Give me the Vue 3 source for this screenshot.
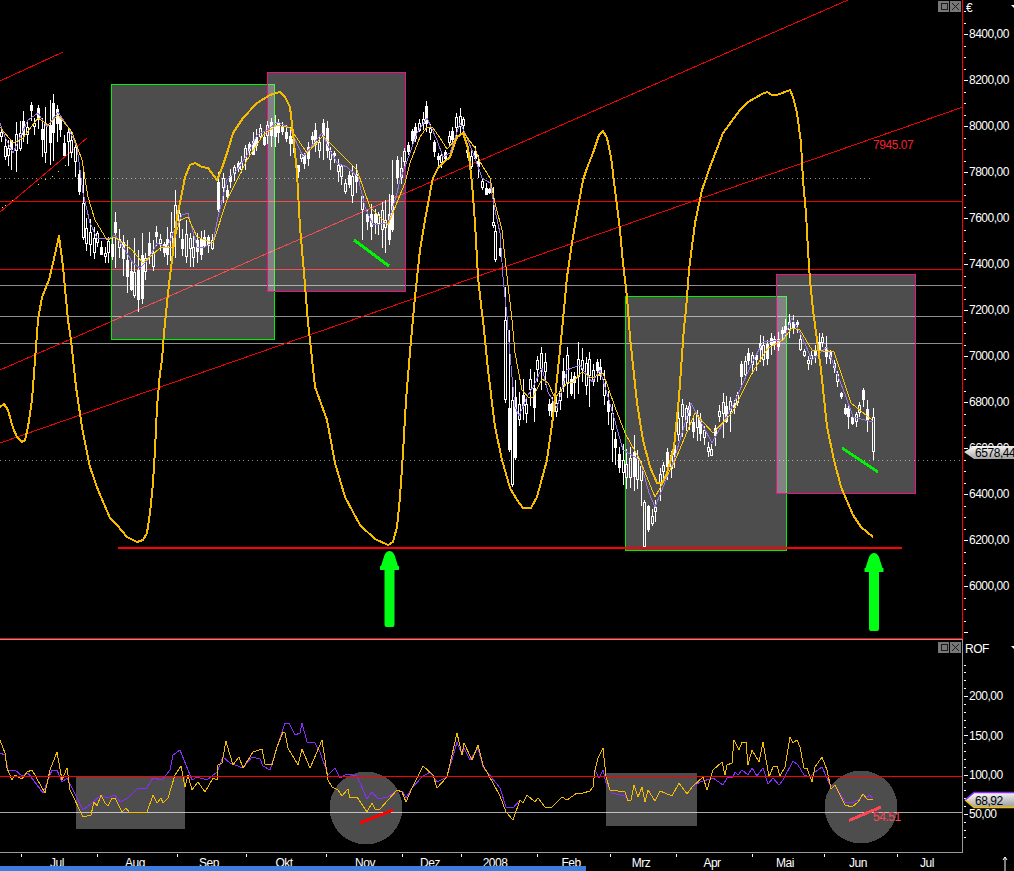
<script setup>
const HI = [[0,125],[10,130],[22,110],[30,100],[38,100],[47,100],[52,90],[60,100],[68,125],[75,140],[80,170],[84,210],[95,225],[105,225],[115,212],[125,240],[135,238],[150,225],[155,222],[165,235],[172,205],[180,190],[190,230],[205,228],[212,230],[218,172],[228,170],[240,155],[250,135],[262,120],[275,115],[290,125],[303,155],[315,122],[327,115],[335,155],[345,165],[358,145],[364,190],[375,205],[385,200],[392,160],[402,150],[408,137],[415,123],[422,110],[426,98],[430,120],[433,137],[438,152],[443,152],[450,122],[455,108],[462,103],[465,133],[470,147],[475,143],[480,162],[485,177],[490,187],[495,230],[500,240],[503,270],[506,287],[510,320],[513,380],[520,353],[527,372],[537,347],[542,342],[546,355],[548,383],[555,392],[561,360],[568,340],[573,363],[579,337],[586,352],[597,352],[603,365],[609,387],[616,427],[626,447],[635,433],[647,487],[655,500],[659,460],[669,443],[679,397],[689,392],[701,413],[712,440],[722,388],[734,395],[740,363],[752,333],[763,330],[780,332],[791,302],[798,320],[807,357],[815,340],[822,327],[834,353],[843,397],[853,413],[863,388],[873,408]]
const LO = [[0,150],[7,170],[12,182],[22,165],[35,140],[45,170],[52,165],[60,155],[70,170],[77,195],[82,240],[90,268],[97,255],[110,270],[118,285],[125,290],[132,300],[140,312],[147,285],[157,270],[165,270],[172,265],[180,258],[192,270],[200,262],[215,250],[222,210],[230,190],[245,170],[260,145],[285,150],[295,175],[310,165],[325,160],[335,180],[345,195],[355,210],[362,240],[375,245],[388,253],[395,230],[402,177],[408,158],[415,143],[425,133],[430,143],[433,155],[438,167],[443,170],[450,148],[457,140],[462,137],[467,158],[470,173],[475,170],[482,192],[490,200],[493,225],[498,260],[502,283],[506,403],[508,450],[512,487],[515,458],[520,428],[534,427],[539,387],[544,410],[548,423],[554,423],[558,427],[562,403],[573,402],[583,390],[589,410],[593,390],[599,383],[609,447],[613,467],[626,490],[638,493],[644,547],[649,532],[655,522],[664,487],[672,487],[679,457],[688,433],[701,447],[709,467],[718,440],[732,435],[741,387],[749,383],[769,365],[786,340],[793,342],[802,360],[812,377],[824,360],[833,378],[841,402],[850,438],[858,435],[870,433],[873,460]]

// Large candles read directly from the chart: x, wick high, body top, body bottom, wick low, filled
const NOTABLE = [
  [11, 150, 140, 150, 170, true], [50, 100, 125, 143, 165, true], [83, 170, 203, 238, 240, false],
  [115, 212, 222, 233, 268, true], [138, 250, 270, 300, 312, true], [134, 238, 272, 296, 298, false],
  [218, 172, 182, 210, 212, true], [175, 190, 205, 228, 258, false], [298, 172, 165, 172, 178, true],
  [362, 195, 196, 210, 240, false], [385, 200, 220, 228, 253, false], [392, 160, 195, 230, 232, true],
  [493, 187, 222, 226, 228, false], [495, 225, 231, 260, 262, false], [505, 287, 320, 400, 403, false],
  [509, 330, 408, 450, 452, true], [512, 380, 400, 485, 487, false], [515, 380, 397, 458, 460, true],
  [644, 500, 502, 547, 549, false], [648, 505, 506, 530, 532, true], [655, 500, 507, 512, 522, false],
  [873, 408, 417, 452, 460, false]
]

const lerp = (pts, x) => {
  for (let i = 1; i < pts.length; i++) {
    if (x <= pts[i][0]) {
      const [a, b] = [pts[i - 1], pts[i]]
      return a[1] + (b[1] - a[1]) * (x - a[0]) / (b[0] - a[0])
    }
  }
  return pts[pts.length - 1][1]
}

let seed = 20080612
const rnd = () => {
  seed = (seed * 16807) % 2147483647
  return seed / 2147483647
}

let wickD = ''
let fillD = ''
let hollowD = ''
const rect = (x, y, w, h) => `M${x} ${y}h${w}v${h}h${-w}z`
const addCandle = (x, high, top, bottom, low, filled) => {
  if (filled) {
    wickD += rect(x, high, 1, low - high)
    fillD += rect(x - 1, top, 3, bottom - top)
  } else {
    wickD += rect(x, high, 1, top - high) + rect(x, bottom, 1, Math.max(0, low - bottom))
    hollowD += `M${x - 0.5} ${top + 0.5}h2v${bottom - top - 1}h-2z`
  }
}
const taken = NOTABLE.map((c) => c[0])
for (let fx = 1; fx < 870; fx += 3.7) {
  const x = Math.round(fx)
  const hi = lerp(HI, x)
  const span = lerp(LO, x) - hi
  const f = 0.4 + 0.6 * Math.pow(rnd(), 1.3)
  const high = Math.round(hi + rnd() * (1 - f) * span)
  const s = f * span
  const low = Math.round(high + s)
  const top = Math.round(high + s * (0.1 + rnd() * 0.3))
  const bottom = Math.min(low, top + Math.max(3, Math.round(s * (0.25 + rnd() * 0.4))))
  const filled = rnd() > 0.5
  if (taken.some((t) => Math.abs(t - x) < 3)) continue
  addCandle(x, high, top, bottom, low, filled)
}
NOTABLE.forEach((c) => addCandle(...c))

const osc = '0,407 4,404 8,410 13,428 17,437 22,442 25,440 28,427 32,400 35,360 38,320 42,297 49,280 53,263 59,236 63,267 68,320 71,340 76,387 82,427 90,467 98,490 110,518 117,525 127,537 137,542 143,540 147,533 150,513 153,483 155,450 157,407 160,373 162,360 164,333 168,293 172,260 177,217 182,193 185,177 190,165 195,163 202,167 208,168 217,180 222,168 228,150 233,133 243,118 257,103 270,95 280,92 285,97 290,107 293,133 297,173 300,227 304,273 308,323 310,340 315,387 327,420 335,463 345,497 360,525 375,539 388,545 393,542 397,527 400,497 403,453 406,400 411,340 412,330 415,297 420,250 425,220 430,193 433,178 438,168 443,163 450,157 457,137 463,133 468,148 472,183 475,223 478,277 482,313 483,320 488,370 495,427 502,460 510,488 517,500 523,508 531,508 537,497 547,460 553,417 560,350 563,320 567,277 572,243 577,213 583,180 587,168 593,153 599,135 603,131 607,138 611,157 615,190 620,230 623,263 627,297 630,337 637,403 643,440 650,467 657,483 662,483 667,473 674,447 679,397 684,327 686,310 689,270 695,223 702,190 710,167 723,133 740,110 748,102 762,94 767,92 772,95 777,95 790,90 793,97 797,113 801,143 803,180 806,213 808,250 810,280 813,310 821,370 827,427 834,460 841,487 853,515 861,527 873,537'

const maPurple = '0,123 5,137 13,153 22,133 28,120 38,113 47,127 58,112 68,127 77,147 83,193 90,223 97,238 110,238 115,235 123,247 133,263 140,268 148,260 157,243 167,248 173,233 182,215 188,213 197,247 203,248 213,242 218,217 227,180 237,170 247,155 257,135 267,130 278,122 290,128 303,157 322,133 330,150 337,163 347,167 358,177 365,207 373,225 388,223 397,193 400,180 410,153 417,133 427,118 437,140 443,157 450,153 460,123 465,133 475,158 482,178 490,183 495,210 500,233 503,277 507,317 508,330 512,377 515,407 519,416 527,397 533,387 542,368 548,392 557,408 567,370 580,365 592,382 600,370 611,407 623,450 640,460 649,493 655,507 674,460 691,403 712,443 734,403 752,363 763,342 783,340 792,318 802,337 812,360 827,347 846,397 853,417 873,422'

const maYellow = '0,127 13,143 23,138 38,118 48,125 58,115 72,132 82,160 88,197 95,220 107,240 115,237 132,250 143,263 160,248 172,247 180,220 188,217 197,237 213,243 227,200 247,160 263,135 277,125 290,128 307,153 323,136 357,170 370,207 388,225 400,195 405,183 410,163 420,137 427,127 433,128 440,138 447,149 455,140 463,132 475,148 480,162 490,178 495,203 502,230 506,267 512,320 515,353 522,390 528,397 533,397 542,379 548,383 555,398 567,383 573,382 582,372 592,378 603,373 615,407 625,433 640,460 655,497 674,463 695,413 713,433 732,413 752,373 768,348 783,340 792,328 800,330 812,350 834,352 851,403 872,420'

const rofYellow = '0,740 5,753 7,768 12,780 15,775 22,779 27,772 32,770 45,793 50,770 57,752 62,780 67,768 70,790 83,817 91,815 94,802 97,806 101,795 105,803 108,806 112,798 115,798 122,812 126,808 129,812 135,813 140,812 147,812 153,795 157,803 161,798 163,803 168,798 175,775 181,766 185,787 188,775 192,790 198,782 205,792 213,778 217,780 218,765 222,763 226,741 230,755 233,765 239,757 243,768 253,752 262,749 265,764 272,765 277,747 283,732 285,733 288,748 298,765 302,749 310,768 317,752 322,740 328,780 332,787 338,790 342,796 348,789 350,798 357,797 367,812 372,803 375,809 380,809 388,800 397,790 402,792 406,802 412,788 423,766 433,775 437,788 447,777 457,733 462,755 464,743 472,760 478,745 483,765 493,783 500,796 506,812 513,820 520,800 523,803 527,795 535,802 538,798 545,807 552,807 562,797 567,800 577,793 583,793 590,791 593,787 595,770 598,758 603,748 606,777 610,790 625,792 628,801 631,800 634,785 638,797 642,787 645,802 648,790 655,801 660,791 672,796 679,783 687,794 692,787 703,777 707,790 713,770 722,762 725,775 727,765 732,763 734,740 739,750 742,742 746,742 748,765 752,750 759,762 763,742 769,777 773,767 777,766 780,776 785,767 790,737 793,743 797,740 800,747 804,768 807,768 812,782 815,767 822,757 827,770 831,789 835,785 845,805 852,807 858,802 863,794 867,799 873,800'

const rofPurple = '0,753 5,755 8,770 15,770 22,776 28,773 43,793 52,770 57,770 62,782 67,778 83,810 91,804 101,795 107,798 115,795 120,802 128,798 138,788 147,788 153,778 162,780 170,770 173,755 180,750 192,780 197,777 207,780 217,772 223,757 230,763 243,768 252,757 260,759 263,766 270,770 277,747 285,723 289,723 295,735 300,733 302,723 307,742 315,743 320,752 328,775 335,768 340,778 347,774 357,776 367,799 372,792 378,799 388,797 397,790 403,792 406,798 412,788 422,777 430,772 437,782 447,777 457,742 462,755 464,748 470,760 478,748 483,767 500,788 506,807 513,808 520,800 523,803 527,795 535,802 538,798 545,807 552,807 562,797 567,800 577,793 583,793 590,791 593,787 595,770 599,778 603,770 606,783 612,793 625,796 628,801 631,800 634,785 638,797 642,787 645,802 648,790 655,801 660,791 672,796 679,783 687,794 692,787 700,782 713,778 723,785 727,778 733,777 735,772 738,775 742,770 748,775 752,768 757,776 763,768 768,784 773,778 779,785 783,780 793,761 798,765 804,775 810,777 815,772 822,767 830,785 835,785 845,802 852,803 858,800 863,795 867,798 869,795 873,798'

const priceLabels = []
for (let v = 8400; v >= 6000; v -= 200) priceLabels.push({ text: `${v},00`, y: 34 + (8400 - v) * 0.23 })
const priceTicks = []
for (let k = -2; k <= 52; k++) priceTicks.push({ y: Math.round(34 + 11.5 * k), long: ((k % 4) + 4) % 4 === 0 })

const rofLabels = [['200,00', 696], ['150,00', 736], ['100,00', 775], ['50,00', 814]]
const rofTicks = []
for (let k = -4; k <= 18; k++) rofTicks.push({ y: Math.round(696 + 7.86 * k), long: ((k % 5) + 5) % 5 === 0 })

const months = [['Jul', 57], ['Aug', 135], ['Sep', 209], ['Okt', 284], ['Nov', 365], ['Dez', 430], ['2008', 495], ['Feb', 571], ['Mrz', 641], ['Apr', 712], ['Mai', 785], ['Jun', 858], ['Jul', 927]]
const monthTicks = [21, 97, 177, 246, 326, 402, 461, 537, 610, 676, 752, 824, 897]
const yellowDots = [[2,207],[5,205],[12,200],[38,184],[45,179],[52,176],[58,171],[65,165]]
</script>

<template>
  <div class="terminal">
    <svg class="pane" width="1014" height="640" viewBox="0 0 1014 640">
      <defs>
        <linearGradient id="tag" x1="0" y1="0" x2="0.2" y2="1">
          <stop offset="0" stop-color="#ffffff" />
          <stop offset="1" stop-color="#a8a8a8" />
        </linearGradient>
      </defs>

      <g class="thin">
        <line x1="0" y1="285.5" x2="962" y2="285.5" class="grey" />
        <line x1="0" y1="316.5" x2="962" y2="316.5" class="grey" />
        <line x1="0" y1="343.5" x2="962" y2="343.5" class="grey" />
        <line x1="0" y1="201.5" x2="962" y2="201.5" class="red" />
        <line x1="0" y1="269.5" x2="962" y2="269.5" class="red" />
        <line x1="0" y1="178.5" x2="870" y2="178.5" class="dotted" />
        <line x1="0" y1="460.5" x2="962" y2="460.5" class="dotted" />
        <line x1="0" y1="81" x2="63" y2="52" class="red" />
        <line x1="0" y1="212" x2="87" y2="138" class="red" />
        <line x1="0" y1="370" x2="848" y2="0" class="red" />
        <line x1="0" y1="443" x2="963" y2="107" class="red" />
      </g>
      <rect v-for="d in yellowDots" :key="d[0]" :x="d[0]" :y="d[1]" width="1" height="1" class="dot" />

      <g class="thin">
        <rect x="111.5" y="84.5" width="163" height="255" class="box box-green" />
        <rect x="267.5" y="72.5" width="138" height="219" class="box box-pink" />
        <rect x="625.5" y="296.5" width="161" height="254" class="box box-green" />
        <rect x="776.5" y="274.5" width="139" height="219" class="box box-pink" />
      </g>

      <g class="thin">
        <path :d="wickD" class="candle-fill" />
        <path :d="fillD" class="candle-fill" />
        <path :d="hollowD" class="candle-hollow" />
        <polyline :points="maPurple" class="ma-purple" />
        <polyline :points="maYellow" class="ma-yellow" />
        <polyline :points="osc" class="osc" />
      </g>

      <g class="thin">
        <line x1="354" y1="240" x2="389" y2="266" class="marker-green" />
        <line x1="842" y1="448" x2="878" y2="472" class="marker-green" />
        <rect x="118" y="547" width="784" height="2" class="red-fill" />
        <rect x="962" y="0" width="1" height="638" class="red-fill" />
        <rect x="0" y="637.5" width="963" height="1.5" class="red-fill" />
        <rect x="0" y="639" width="963" height="1" class="axis-fill" />
      </g>

      <path class="arrow" d="M389.5 551q3 0 5 4l3.500 11h1v4h-4.500v54.500q0 2.500 -2 2.500h-6q-2 0 -2 -2.500v-54.500h-4.500v-4h1l3.500 -11q2 -4 5 -4z" />
      <path class="arrow" d="M874 553q3 0 5 4l3.500 11h1v4h-4.500v56.500q0 2.500 -2 2.500h-6q-2 0 -2 -2.500v-56.500h-4.500v-4h1l3.500 -11q2 -4 5 -4z" />

      <text x="873" y="149" class="note">7945.07</text>

      <g class="thin">
        <rect x="938" y="1" width="11" height="11" class="btn" />
        <rect x="941.5" y="3.5" width="6" height="6" class="btn-icon" />
        <rect x="950" y="1" width="11" height="11" class="btn" />
        <path d="M952 3l7 7M959 3l-7 7" class="btn-icon" />
      </g>

      <g class="thin">
        <rect v-for="t in priceTicks" :key="t.y" x="964" :y="t.y" :width="t.long ? 4 : 2" height="1" class="white-fill" />
      </g>
      <text x="966" y="12" class="axis">€</text>
      <path d="M1011 5h3v3z" class="white-fill" />
      <text v-for="l in priceLabels" :key="l.text" x="969" :y="l.y + 4" class="axis">{{ l.text }}</text>

      <path d="M964 452l10 -6h40v13h-40z" fill="url(#tag)" />
      <text x="975" y="457" class="tag-text">6578,44</text>
    </svg>

    <svg class="pane" width="1014" height="231" viewBox="0 640 1014 231">
      <defs>
        <linearGradient id="tag2" x1="0" y1="0" x2="0.2" y2="1">
          <stop offset="0" stop-color="#ffffff" />
          <stop offset="1" stop-color="#a8a8a8" />
        </linearGradient>
      </defs>

      <g class="thin">
        <line x1="0" y1="812.5" x2="962" y2="812.5" class="grey-light" />
        <rect x="76" y="776" width="109" height="53" class="shade" />
        <rect x="606" y="773" width="91" height="53" class="shade" />
      </g>
      <circle cx="366" cy="808" r="36.500" class="shade thin" />
      <circle cx="861" cy="807" r="36.500" class="shade thin" />

      <g class="thin">
        <polyline :points="rofPurple" class="rof-purple" />
        <polyline :points="rofYellow" class="rof-yellow" />
        <line x1="0" y1="776.5" x2="962" y2="776.5" class="rof-red" />
        <line x1="360" y1="823" x2="393" y2="810" class="marker-red" />
        <line x1="849" y1="820.500" x2="881" y2="807" class="marker-red soft" />
        <rect x="962" y="640" width="1" height="213" class="axis-fill" />
        <rect x="0" y="852" width="963" height="1" class="axis-fill" />
      </g>

      <text x="873" y="821" class="note soft-note">54.51</text>

      <g class="thin">
        <rect x="938" y="642" width="11" height="11" class="btn" />
        <rect x="941.5" y="644.5" width="6" height="6" class="btn-icon" />
        <rect x="950" y="642" width="11" height="11" class="btn" />
        <path d="M952 644l7 7M959 644l-7 7" class="btn-icon" />
      </g>

      <text x="965" y="653" class="axis">ROF</text>
      <path d="M1011 646h3v3z" class="white-fill" />

      <g class="thin">
        <rect v-for="t in rofTicks" :key="t.y" x="964" :y="t.y" :width="t.long ? 4 : 2" height="1" class="white-fill" />
        <rect v-for="x in monthTicks" :key="x" :x="x" y="854" width="1" height="3" class="white-fill" />
      </g>
      <text v-for="l in rofLabels" :key="l[0]" x="969" :y="l[1] + 4" class="axis">{{ l[0] }}</text>

      <path d="M965 800l9 -7h40v14h-40z" fill="url(#tag2)" />
      <path d="M965 800l9 -7.500h40" class="tag-edge-top" />
      <path d="M965 800l9 7.500h40" class="tag-edge-bottom" />
      <text x="975" y="804.500" class="tag-text">68,92</text>

      <text v-for="(m, i) in months" :key="i" :x="m[1]" y="867" text-anchor="middle" class="axis">{{ m[0] }}</text>

      <path d="M1005 871v-14M1003 860l2 -3 2 3" class="up-arrow" />
      <rect x="0" y="866" width="586" height="5" class="progress" />
    </svg>
  </div>
</template>

<style scoped>
.terminal {
  width: 1014px;
  height: 871px;
  background: #000;
  overflow: hidden;
  display: flex;
  flex-direction: column;
}
.pane {
  display: block;
  flex: none;
}
.thin {
  shape-rendering: crispEdges;
}
.grey { stroke: #8e8e8e; stroke-width: 1; }
.red { stroke: #f00000; stroke-width: 1; }
.dotted { stroke: #8a8a8a; stroke-width: 1; stroke-dasharray: 1 3.500; }
.dot { fill: #ffee00; }
.box { fill: rgba(255, 255, 255, 0.3); stroke-width: 1; }
.box-green { stroke: #00f000; }
.box-pink { stroke: #e8128a; }
.candle-fill { fill: #fff; }
.candle-hollow { fill: none; stroke: #fff; stroke-width: 1; }
polyline { fill: none; stroke-linejoin: round; }
.ma-purple { stroke: #9478e0; stroke-width: 1; }
.ma-yellow { stroke: #ffc800; stroke-width: 1; }
.osc { stroke: #f5bc00; stroke-width: 2; }
.marker-green { stroke: #00f500; stroke-width: 3; }
.marker-red { stroke: #ff0000; stroke-width: 3; }
.marker-red.soft { stroke: #ff4653; }
.red-fill { fill: #ff0000; }
.axis-fill { fill: #9a9a9a; }
.white-fill { fill: #ffffff; }
.arrow { fill: #00ff14; }
.note {
  font-family: "Liberation Sans", sans-serif;
  font-size: 12px;
  letter-spacing: -0.45px;
  fill: #f02030;
}
.soft-note { fill: #ff4653; }
.axis {
  font-family: "Liberation Sans", sans-serif;
  font-size: 12px;
  letter-spacing: -0.5px;
  fill: #ffffff;
}
.tag-text {
  font-family: "Liberation Sans", sans-serif;
  font-size: 12px;
  letter-spacing: -0.45px;
  fill: #000000;
}
.btn { fill: #777777; }
.btn-icon { fill: none; stroke: #1c1c1c; stroke-width: 1; }
.grey-light { stroke: #a8a8a8; stroke-width: 1; }
.shade { fill: rgba(255, 255, 255, 0.3); }
.rof-purple { stroke: #8a2cff; stroke-width: 1; }
.rof-yellow { stroke: #f4bc00; stroke-width: 1; }
.rof-red { stroke: #ff0000; stroke-width: 1; }
.tag-edge-top { fill: none; stroke: #8a2cff; stroke-width: 1.500; }
.tag-edge-bottom { fill: none; stroke: #f4bc00; stroke-width: 1.500; }
.up-arrow { fill: none; stroke: #fff; stroke-width: 1; }
.progress { fill: #3c7ddd; }
</style>
